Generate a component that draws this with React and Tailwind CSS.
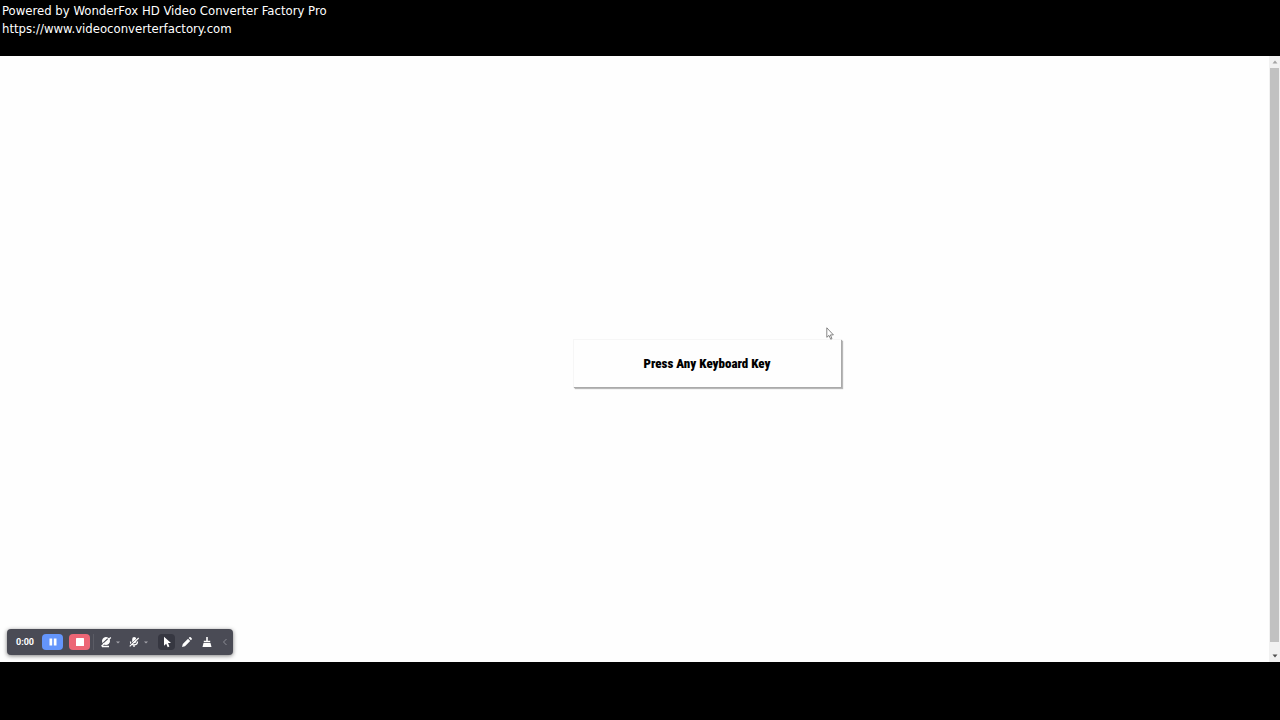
function Credit() {
  return (
    <header className="h-14 shrink-0 bg-black pl-0.5 pt-0.5 font-['DejaVu_Sans_Condensed','DejaVu_Sans',sans-serif] text-[13px] leading-[18px] text-white">
      <p>Powered by WonderFox HD Video Converter Factory Pro</p>
      <a href="https://www.videoconverterfactory.com">https://www.videoconverterfactory.com</a>
    </header>
  );
}

function Scrollbar() {
  return (
    <div className="flex w-[11px] shrink-0 flex-col items-center bg-[#f1f1f1]">
      <button type="button" aria-label="Scroll up" className="flex h-3 w-full shrink-0 items-center justify-center">
        <svg viewBox="0 0 6 4" className="h-1 w-1.5" fill="#a3a3a3"><path d="M3 0.5 5.5 3.5H0.5z" /></svg>
      </button>
      <div className="w-[9px] flex-1 bg-[#c1c1c1]" />
      <button type="button" aria-label="Scroll down" className="flex h-5 w-full shrink-0 items-end justify-center pb-1">
        <svg viewBox="0 0 6 4" className="h-1 w-1.5" fill="#505050"><path d="M3 3.5 0.5 0.5h5z" /></svg>
      </button>
    </div>
  );
}

function Recorder() {
  return (
    <div role="toolbar" aria-label="Recorder" className="absolute bottom-[7px] left-[7px] flex h-[26px] w-[226px] items-center rounded bg-[#4a4b55] pl-2 text-white shadow-[0_1px_4px_rgba(0,0,0,0.5)]">
      <time className="w-[27px] pl-px font-['Roboto',sans-serif] text-[9px] font-bold leading-3">0:00</time>
      <button type="button" aria-label="Pause" className="flex h-4 w-[21px] items-center justify-center rounded bg-[#6495fb]">
        <svg viewBox="0 0 8 8" className="size-2" fill="currentColor"><path d="M0.5 0.5h2.7v7H.5zM4.8.5h2.7v7H4.8z" /></svg>
      </button>
      <button type="button" aria-label="Stop" className="ml-1.5 flex h-4 w-[21px] items-center justify-center rounded bg-[#ec6675]">
        <svg viewBox="0 0 8 8" className="size-2" fill="currentColor"><rect width="8" height="8" rx=".5" /></svg>
      </button>
      <span className="ml-[3px] h-4 w-px bg-[#5b5c65]" />
      <button type="button" aria-label="Camera off" className="ml-1 flex size-4 items-center justify-center">
        <svg viewBox="0 0 12 12" className="size-3" fill="none" stroke="currentColor">
          <circle cx="6" cy="5" r="3.5" fill="currentColor" strokeWidth="1" />
          <path d="M2 10.5h7" strokeWidth="1.5" />
          <path d="M3.5 7.2 8 3" stroke="#4a4b55" strokeWidth="1.8" />
          <path d="M1.5 10.3 10.8 1.5" strokeWidth="1.3" />
        </svg>
      </button>
      <button type="button" aria-label="Camera options" className="flex h-4 w-2 items-center justify-center">
        <svg viewBox="0 0 4 3" className="h-[3px] w-1" fill="#a5a5ac"><path d="M0 .5h4L2 2.5z" /></svg>
      </button>
      <button type="button" aria-label="Microphone off" className="ml-1 flex size-4 items-center justify-center">
        <svg viewBox="0 0 12 12" className="size-3" fill="none" stroke="currentColor">
          <rect x="4.2" y="1" width="4" height="6.3" rx="2" fill="currentColor" stroke="none" />
          <path d="M2.5 5.5c0 4.4 7 4.4 7 0M6 8.5V11" strokeWidth="1.3" />
          <path d="m2.4 8.6 8-7.2" stroke="#4a4b55" strokeWidth="1" />
          <path d="m1.7 10.4 9-8.4" strokeWidth="1.2" />
        </svg>
      </button>
      <button type="button" aria-label="Microphone options" className="flex h-4 w-2 items-center justify-center">
        <svg viewBox="0 0 4 3" className="h-[3px] w-1" fill="#a5a5ac"><path d="M0 .5h4L2 2.5z" /></svg>
      </button>
      <button type="button" aria-label="Pointer" className="ml-2 flex h-4 w-[17px] items-center justify-center rounded-sm bg-[#363741]">
        <svg viewBox="0 0 12 12" className="size-3" fill="currentColor"><path d="M3 .7v9l2.2-2 1.5 3.5 1.7-.7L7 7.1h3z" /></svg>
      </button>
      <button type="button" aria-label="Pencil" className="ml-1 flex size-4 items-center justify-center">
        <svg viewBox="0 0 12 12" className="size-3" fill="currentColor"><path d="m1 11 .8-3L7 2.8l2.2 2.2L4 10.2zM7.7 2.1l1-1c.7-.6 2.8 1.4 2.2 2.2l-1 1z" /></svg>
      </button>
      <button type="button" aria-label="Clear" className="ml-1 flex size-4 items-center justify-center">
        <svg viewBox="0 0 12 12" className="size-3" fill="currentColor"><path d="M5.2 1h1.6v3.7h2.4v1.5H2.8V4.7h2.4zM2.5 7h7l1 4h-9z" /></svg>
      </button>
      <button type="button" aria-label="Collapse toolbar" className="ml-1 flex h-4 w-3 items-center justify-center">
        <svg viewBox="0 0 6 8" className="h-2 w-1.5" fill="none" stroke="#8b8c94"><path d="M4.5 1 1.5 4l3 3" /></svg>
      </button>
    </div>
  );
}

export default function App() {
  return (
    <div className="flex min-h-screen flex-col bg-black">
      <Credit />
      <div className="flex flex-1 bg-white">
        <main className="relative flex flex-1 items-center justify-center bg-[#fefefe] pl-36 pt-2">
          <button type="button" className="relative h-12 w-[268px] border-l border-t border-[#f6f6f6] bg-[#fefefe] font-['Impact','Roboto_Condensed','Roboto',sans-serif] text-[13px] font-black leading-5 text-black shadow-[1px_1px_1px_#aaaaaa,2px_2px_1px_#bbbbbb]">
            Press Any Keyboard Key
            <svg viewBox="0 0 8 13" className="absolute -top-[13px] right-[7px] h-[13px] w-2" fill="#ffffff" stroke="#555555" strokeWidth=".7">
              <path d="M.8.8v9.5L3 8.4l1.7 3.8 1.3-.6-1.6-3.7h3z" />
            </svg>
          </button>
          <Recorder />
        </main>
        <Scrollbar />
      </div>
      <footer className="h-[58px] shrink-0 bg-black" />
    </div>
  );
}
